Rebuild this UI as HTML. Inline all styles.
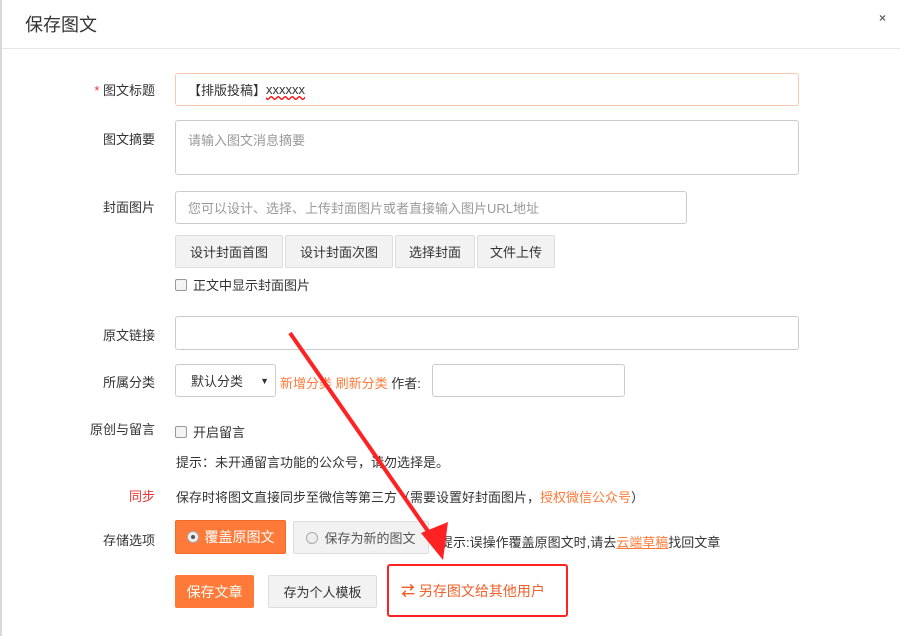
<!DOCTYPE html>
<html><head><meta charset="utf-8"><style>
*{box-sizing:border-box;margin:0;padding:0}
body{width:900px;height:636px;background:#fff;font-family:"Liberation Sans","Noto Sans CJK SC",sans-serif;font-size:13px;color:#333;position:relative;overflow:hidden}
.a{position:absolute;white-space:nowrap}
.lbl{position:absolute;right:745px;white-space:nowrap;color:#333}
.in{position:absolute;border:1px solid #ccc;border-radius:3px;background:#fff;color:#999;padding-left:12px;display:flex;align-items:center}
.btn{position:absolute;background:#f2f2f2;border:1px solid #ddd;border-radius:2px;display:flex;align-items:center;justify-content:center;color:#333}
.cb{display:inline-block;width:12px;height:12px;border:1px solid #999;border-radius:2px;background:#f4f4f4;vertical-align:-1px;margin-right:6px}
.o{color:#ff7a38}
.rad{display:inline-block;width:12px;height:12px;border:1px solid #aaa;border-radius:50%;background:#eee;vertical-align:-1px;margin-right:6px;position:relative}
.rad.on::after{content:"";position:absolute;left:3px;top:3px;width:4px;height:4px;border-radius:50%;background:#555}
</style></head><body>
<div class="a" style="left:0;top:0;width:2px;height:636px;background:#d8d8d8"></div>
<div class="a" style="left:25px;top:11px;font-size:18px;color:#333">保存图文</div>
<div class="a" style="left:879px;top:11px;font-size:12px;font-weight:bold;color:#666">×</div>
<div class="a" style="left:2px;top:48px;width:898px;height:1px;background:#e5e5e5"></div>

<div class="lbl" style="top:80px"><span style="color:#e33">*</span> 图文标题</div>
<div class="in" style="left:175px;top:73px;width:624px;height:33px;border-color:#f7c9b4;color:#333">【排版投稿】<span style="text-decoration:underline wavy red">xxxxxx</span></div>

<div class="lbl" style="top:129px">图文摘要</div>
<div class="in" style="left:175px;top:120px;width:624px;height:55px;align-items:flex-start;padding-top:9px">请输入图文消息摘要</div>

<div class="lbl" style="top:197px">封面图片</div>
<div class="in" style="left:175px;top:191px;width:512px;height:33px">您可以设计、选择、上传封面图片或者直接输入图片URL地址</div>
<div class="btn" style="left:175px;top:235px;width:108px;height:33px">设计封面首图</div>
<div class="btn" style="left:285px;top:235px;width:108px;height:33px">设计封面次图</div>
<div class="btn" style="left:395px;top:235px;width:80px;height:33px">选择封面</div>
<div class="btn" style="left:477px;top:235px;width:78px;height:33px">文件上传</div>
<div class="a" style="left:175px;top:275px"><span class="cb"></span>正文中显示封面图片</div>

<div class="lbl" style="top:325px">原文链接</div>
<div class="in" style="left:175px;top:316px;width:624px;height:34px"></div>

<div class="lbl" style="top:372px">所属分类</div>
<div class="in" style="left:175px;top:364px;width:101px;height:33px;color:#333;padding-left:15px">默认分类<span style="position:absolute;right:6px;font-size:9px">▼</span></div>
<div class="a" style="left:280px;top:373px"><span class="o">新增分类 刷新分类</span> 作者:</div>
<div class="in" style="left:432px;top:364px;width:193px;height:33px"></div>

<div class="lbl" style="top:419px">原创与留言</div>
<div class="a" style="left:175px;top:422px"><span class="cb"></span>开启留言</div>
<div class="a" style="left:176px;top:452px">提示：未开通留言功能的公众号，请勿选择是。</div>

<div class="lbl" style="top:486px;color:#e33">同步</div>
<div class="a" style="left:176px;top:487px">保存时将图文直接同步至微信等第三方（需要设置好封面图片，<span class="o">授权微信公众号</span>）</div>

<div class="lbl" style="top:530px">存储选项</div>
<div class="btn" style="left:175px;top:520px;width:111px;height:34px;background:#ff7a38;border-color:#f06a28;color:#fff;font-size:14px"><span class="rad on"></span>覆盖原图文</div>
<div class="btn" style="left:293px;top:521px;width:136px;height:33px;color:#555"><span class="rad"></span>保存为新的图文</div>
<div class="a" style="left:440px;top:532px">提示:误操作覆盖原图文时,请去<span class="o" style="text-decoration:underline">云端草稿</span>找回文章</div>

<div class="btn" style="left:175px;top:575px;width:79px;height:33px;background:#ff7a38;border-color:#ff7a38;color:#fff;font-size:14px">保存文章</div>
<div class="btn" style="left:268px;top:575px;width:109px;height:33px">存为个人模板</div>
<div class="a" style="left:387px;top:564px;width:181px;height:53px;border:2px solid #f22;border-radius:3px"></div>
<div class="a" style="left:401px;top:581px;color:#f0602a;font-size:14px"><b>⇄</b> 另存图文给其他用户</div>

<svg class="a" style="left:0;top:0" width="900" height="636">
<line x1="290" y1="333" x2="432" y2="537" stroke="#f22" stroke-width="4"/>
<polygon points="443,560 421,533 448,522" fill="#f22"/>
</svg>
</body></html>
